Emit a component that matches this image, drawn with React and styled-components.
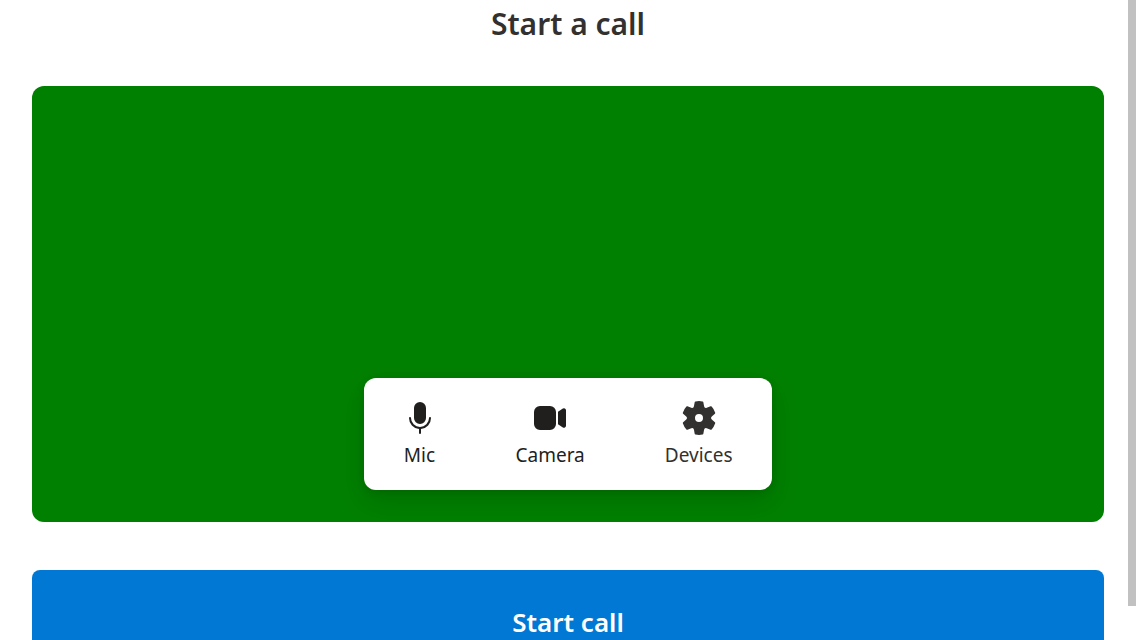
import React from "react";
import styled, { createGlobalStyle } from "styled-components";

const GlobalStyle = createGlobalStyle`
  * {
    box-sizing: border-box;
  }

  body {
    margin: 0;
    background: #ffffff;
    color: #323130;
    font-family: "Segoe UI", "Noto Sans", "Open Sans", sans-serif;
  }

  button {
    border: 0;
    font-family: inherit;
    cursor: pointer;
  }
`;

const Page = styled.div`
  display: flex;
  height: 100vh;
  overflow: hidden;
`;

const Content = styled.main`
  flex: 1;
  min-width: 0;
  padding: 0 24px 0 32px;
`;

const Title = styled.h1`
  margin: 0 0 38px;
  font-size: 30px;
  font-weight: 600;
  line-height: 48px;
  text-align: center;
`;

const Preview = styled.section`
  display: flex;
  align-items: flex-end;
  justify-content: center;
  min-height: 436px;
  margin-bottom: 48px;
  padding-bottom: 32px;
  border-radius: 12px;
  background: #008000;
  overflow: hidden;
`;

const Toolbar = styled.div`
  display: flex;
  height: 112px;
  border-radius: 12px;
  background: #ffffff;
  box-shadow: 0 12px 28px rgba(0, 0, 0, 0.13), 0 2px 8px rgba(0, 0, 0, 0.11);
`;

const ToolButton = styled.button`
  display: flex;
  flex-direction: column;
  align-items: center;
  padding: 20px 40px 0;
  background: transparent;
  color: ${({ $muted }) => ($muted ? "#323130" : "#201f1e")};
  font-size: 19px;
  line-height: 28px;
`;

const Icon = styled.svg`
  width: 40px;
  height: 40px;
  margin: 0 -4px 3px;
  fill: currentColor;
`;

const StartButton = styled.button`
  display: block;
  width: 100%;
  height: 104px;
  border-radius: 8px;
  background: #0078d4;
  color: #ffffff;
  font-size: 26px;
  font-weight: 600;
  line-height: 40px;
`;

const ScrollRail = styled.div`
  flex: none;
  width: 8px;
  height: 100%;
`;

const ScrollThumb = styled.div`
  height: 94.7%;
  background: #c1c1c1;
`;

const tools = [
  {
    label: "Mic",
    path: "M5.5 10a.5.5 0 0 0-1 0 5.5 5.5 0 0 0 5 5.48v2.02a.5.5 0 0 0 1 0v-2.02a5.5 5.5 0 0 0 5-5.48.5.5 0 0 0-1 0 4.5 4.5 0 1 1-9 0ZM10 2a3 3 0 0 0-3 3v5a3 3 0 1 0 6 0V5a3 3 0 0 0-3-3Z",
  },
  {
    label: "Camera",
    path: "M13 7a3 3 0 0 0-3-3H5a3 3 0 0 0-3 3v6a3 3 0 0 0 3 3h5a3 3 0 0 0 3-3V7Zm1 -.07v6.14l2.43 1.67a1 1 0 0 0 1.57-.82V6.08a1 1 0 0 0-1.57-.82L14 6.93Z",
  },
  {
    label: "Devices",
    muted: true,
    path: "M1.91 7.38A8.5 8.5 0 0 1 3.7 4.3a.5.5 0 0 1 .54-.13l1.92.68a1 1 0 0 0 1.32-.76l.36-2a.5.5 0 0 1 .4-.4 8.53 8.53 0 0 1 3.55 0c.2.04.35.2.38.4l.37 2a1 1 0 0 0 1.32.76l1.92-.68a.5.5 0 0 1 .54.13 8.5 8.5 0 0 1 1.78 3.08c.06.2 0 .4-.15.54l-1.56 1.32a1 1 0 0 0 0 1.52l1.56 1.32a.5.5 0 0 1 .15.54 8.5 8.5 0 0 1-1.78 3.08.5.5 0 0 1-.54.13l-1.92-.68a1 1 0 0 0-1.32.76l-.37 2a.5.5 0 0 1-.38.4 8.53 8.53 0 0 1-3.56 0 .5.5 0 0 1-.39-.4l-.36-2a1 1 0 0 0-1.32-.76l-1.92.68a.5.5 0 0 1-.54-.13 8.5 8.5 0 0 1-1.78-3.08.5.5 0 0 1 .15-.54l1.56-1.32a1 1 0 0 0 0-1.52L2.06 7.92a.5.5 0 0 1-.15-.54ZM8 10a2 2 0 1 0 4 0 2 2 0 0 0-4 0Z",
  },
];

export default function App() {
  return (
    <>
      <GlobalStyle />
      <Page>
        <Content>
          <Title>Start a call</Title>
          <Preview aria-label="Video preview">
            <Toolbar role="toolbar" aria-label="Call settings">
              {tools.map(({ label, path, muted }) => (
                <ToolButton key={label} type="button" $muted={muted}>
                  <Icon viewBox="0 0 20 20" aria-hidden="true">
                    <path d={path} />
                  </Icon>
                  {label}
                </ToolButton>
              ))}
            </Toolbar>
          </Preview>
          <StartButton type="button">Start call</StartButton>
        </Content>
        <ScrollRail aria-hidden="true">
          <ScrollThumb />
        </ScrollRail>
      </Page>
    </>
  );
}
